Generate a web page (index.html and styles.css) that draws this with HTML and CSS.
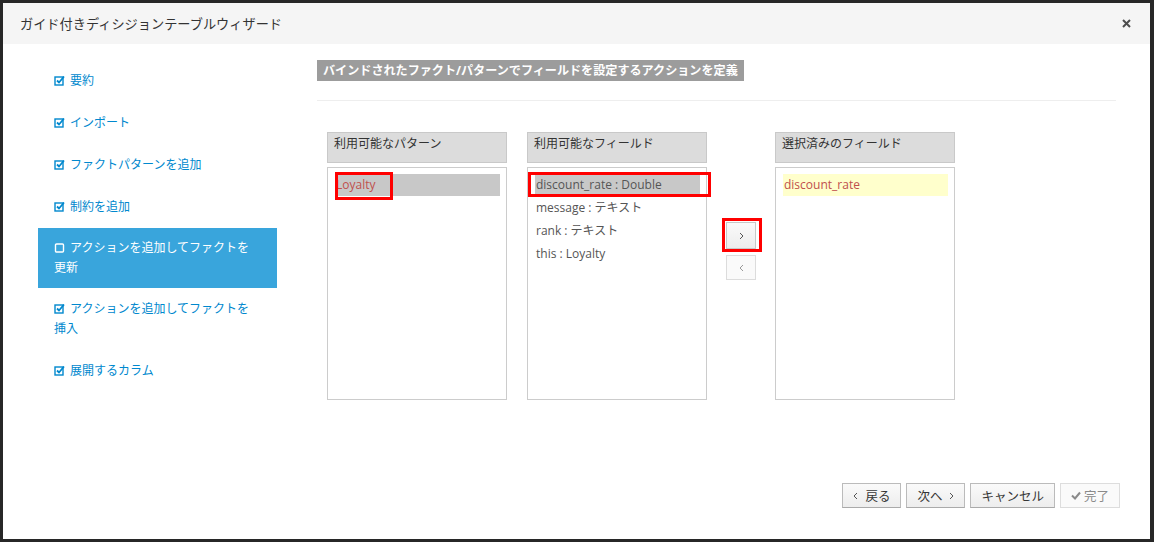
FILE: index.html
```html
<!DOCTYPE html>
<html lang="ja">
<head>
  <meta charset="UTF-8">
  <title>ガイド付きディシジョンテーブルウィザード</title>
  <link rel="stylesheet" href="styles.css">
</head>
<body>

  <div class="modal">
    <!-- Header -->
    <div class="modal-header">
      <span class="modal-title">ガイド付きディシジョンテーブルウィザード</span>
      <svg class="close-icon" width="9" height="9" viewBox="0 0 9 9"><path d="M1 1L8 8M8 1L1 8" stroke="#4d4d4d" stroke-width="2"/></svg>
    </div>

    <div class="modal-body">
      <!-- Wizard steps -->
      <ul class="steps">
        <li class="step"><svg class="chk" viewBox="0 0 11 11"><rect x="1" y="2" width="8" height="8" fill="none" stroke="currentColor" stroke-width="1.4"/><path d="M3 5.5L5 7.5L10 1.5" fill="none" stroke="currentColor" stroke-width="1.8"/></svg>要約</li>
        <li class="step"><svg class="chk" viewBox="0 0 11 11"><rect x="1" y="2" width="8" height="8" fill="none" stroke="currentColor" stroke-width="1.4"/><path d="M3 5.5L5 7.5L10 1.5" fill="none" stroke="currentColor" stroke-width="1.8"/></svg>インポート</li>
        <li class="step"><svg class="chk" viewBox="0 0 11 11"><rect x="1" y="2" width="8" height="8" fill="none" stroke="currentColor" stroke-width="1.4"/><path d="M3 5.5L5 7.5L10 1.5" fill="none" stroke="currentColor" stroke-width="1.8"/></svg>ファクトパターンを追加</li>
        <li class="step"><svg class="chk" viewBox="0 0 11 11"><rect x="1" y="2" width="8" height="8" fill="none" stroke="currentColor" stroke-width="1.4"/><path d="M3 5.5L5 7.5L10 1.5" fill="none" stroke="currentColor" stroke-width="1.8"/></svg>制約を追加</li>
        <li class="step active"><svg class="chk" viewBox="0 0 11 11"><rect x="1.5" y="2" width="8" height="8" rx="1" fill="none" stroke="currentColor" stroke-width="1.4"/></svg>アクションを追加してファクトを更新</li>
        <li class="step"><svg class="chk" viewBox="0 0 11 11"><rect x="1" y="2" width="8" height="8" fill="none" stroke="currentColor" stroke-width="1.4"/><path d="M3 5.5L5 7.5L10 1.5" fill="none" stroke="currentColor" stroke-width="1.8"/></svg>アクションを追加してファクトを挿入</li>
        <li class="step"><svg class="chk" viewBox="0 0 11 11"><rect x="1" y="2" width="8" height="8" fill="none" stroke="currentColor" stroke-width="1.4"/><path d="M3 5.5L5 7.5L10 1.5" fill="none" stroke="currentColor" stroke-width="1.8"/></svg>展開するカラム</li>
      </ul>

      <!-- Step content -->
      <div class="content">
        <div class="section-title">バインドされたファクト/パターンでフィールドを設定するアクションを定義</div>
        <div class="divider"></div>

        <div class="pickers">
          <div class="picker">
            <div class="picker-header">利用可能なパターン</div>
            <div class="picker-list">
              <div class="item selected red-text">Loyalty</div>
              <div class="mark mark-pattern"></div>
            </div>
          </div>

          <div class="picker">
            <div class="picker-header">利用可能なフィールド</div>
            <div class="picker-list">
              <div class="item selected">discount_rate : Double</div>
              <div class="item">message : テキスト</div>
              <div class="item">rank : テキスト</div>
              <div class="item">this : Loyalty</div>
              <div class="mark mark-field"></div>
            </div>
          </div>

          <div class="move-buttons">
            <button class="move-btn add">
              <svg width="5" height="8" viewBox="0 0 5 8"><path d="M1 1L4 4L1 7" fill="none" stroke="#555" stroke-width="1"/></svg>
              <span class="mark mark-add"></span>
            </button>
            <button class="move-btn remove">
              <svg width="5" height="8" viewBox="0 0 5 8"><path d="M4 1L1 4L4 7" fill="none" stroke="#999" stroke-width="1"/></svg>
            </button>
          </div>

          <div class="picker">
            <div class="picker-header">選択済みのフィールド</div>
            <div class="picker-list">
              <div class="item chosen red-text">discount_rate</div>
            </div>
          </div>
        </div>
      </div>
    </div>

    <!-- Footer -->
    <div class="modal-footer">
      <button class="btn"><svg width="5" height="8" viewBox="0 0 5 8"><path d="M4 1L1 4L4 7" fill="none" stroke="#555" stroke-width="1"/></svg>戻る</button>
      <button class="btn">次へ<svg width="5" height="8" viewBox="0 0 5 8"><path d="M1 1L4 4L1 7" fill="none" stroke="#555" stroke-width="1"/></svg></button>
      <button class="btn">キャンセル</button>
      <button class="btn disabled"><svg width="10" height="9" viewBox="0 0 10 9"><path d="M1 4.5L4 7.5L9 1.5" fill="none" stroke="#8a8a8a" stroke-width="2"/></svg>完了</button>
    </div>
  </div>

</body>
</html>
```

FILE: styles.css
```css
body {
  margin: 0;
  background-color: #272727;
  font-family: 'Open Sans', 'Noto Sans CJK JP', sans-serif;
  color: #363636;
}
.modal {
  margin: 3px 4px 0 3px;
  height: 536px;
  background-color: #fff;
  display: flex;
  flex-direction: column;
}
.modal-header {
  height: 41px;
  background-color: #f5f5f5;
  padding: 0 19px 0 17px;
  display: flex;
  align-items: center;
  justify-content: space-between;
}
.modal-title {
  font-size: 13.2px;
  color: #333;
}
.modal-body {
  flex: 1;
  display: flex;
  padding: 16px 34px 0 35px;
}
.steps {
  list-style: none;
  margin: 0;
  padding: 0;
  width: 239px;
  flex-shrink: 0;
}
.step {
  font-size: 12px;
  line-height: 20px;
  padding: 11px 16px;
  color: #0088ce;
}
.step.active {
  background-color: #39a5dc;
  color: #fff;
  padding: 10px 16px;
}
.chk {
  width: 11px;
  height: 11px;
  margin-right: 5px;
  vertical-align: -1px;
}
.content {
  flex: 1;
  margin-left: 40px;
}
.section-title {
  width: fit-content;
  background-color: #9c9c9c;
  color: #fff;
  font-size: 12.1px;
  font-weight: bold;
  line-height: 21px;
  padding: 0 6px;
}
.divider {
  border-top: 1px solid #eee;
  margin-top: 19px;
}
.pickers {
  display: flex;
  margin: 31px 0 0 10px;
}
.picker {
  width: 180px;
  margin-right: 20px;
}
.picker-header {
  background-color: #dcdcdc;
  border: 1px solid #c9c9c9;
  font-size: 12px;
  padding: 1px 6px 0;
  box-sizing: border-box;
  height: 31px;
  color: #333;
}
.picker-list {
  position: relative;
  margin-top: 4px;
  height: 233px;
  box-sizing: border-box;
  border: 1px solid #ccc;
  padding: 6px 6px 6px 7px;
}
.item {
  font-size: 12px;
  line-height: 22px;
  height: 22px;
  margin-bottom: 1px;
  color: #555;
  padding-left: 1px;
}
.item.selected {
  background-color: #c8c8c8;
}
.item.chosen {
  background-color: #ffffcc;
}
.red-text {
  color: #c0504d;
}
.mark {
  position: absolute;
  border: 3px solid #f00;
}
.mark-pattern {
  left: 7px;
  top: 4px;
  width: 52px;
  height: 22px;
}
.mark-field {
  left: 0;
  top: 4px;
  width: 177px;
  height: 19px;
}
.move-buttons {
  width: 30px;
  margin: 0 19px 0 -1px;
  padding-top: 90px;
  display: flex;
  flex-direction: column;
  gap: 6px;
}
.move-btn {
  position: relative;
  width: 30px;
  padding: 0;
  display: flex;
  align-items: center;
  justify-content: center;
  border: 1px solid #c8c8c8;
  background: linear-gradient(#fafafa, #ededed);
}
.move-btn.add {
  height: 27px;
}
.move-btn.remove {
  height: 25px;
  background: #fafafa;
  border-color: #dcdcdc;
}
.mark-add {
  left: -5px;
  top: -5px;
  width: 34px;
  height: 28px;
}
.modal-footer {
  display: flex;
  justify-content: flex-end;
  gap: 5px;
  padding: 0 30px 31px 0;
}
.btn {
  height: 25px;
  padding: 0 10px;
  font-family: 'Open Sans', 'Noto Sans CJK JP', sans-serif;
  font-size: 12.5px;
  color: #363636;
  background: linear-gradient(#fafafa, #ededed);
  border: 1px solid #bbb;
  border-bottom-color: #aaa;
  display: flex;
  align-items: center;
  gap: 7px;
}
.btn.disabled {
  background: #fafafa;
  border-color: #ddd;
  color: #8a8a8a;
  gap: 3px;
}
```
